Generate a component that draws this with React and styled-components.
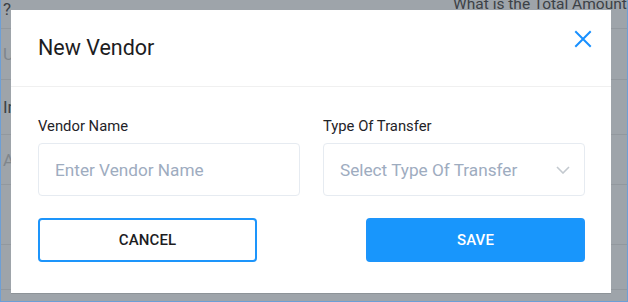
import React from "react";
import styled, { createGlobalStyle } from "styled-components";

const Global = createGlobalStyle`
  html, body { margin: 0; padding: 0; }
  body { font-family: Roboto, "Liberation Sans", sans-serif; background: #9ea4aa; }
  * { box-sizing: border-box; }
`;

const Frame = styled.div`
  position: relative;
  width: 628px;
  height: 302px;
  overflow: hidden;
  background: #9ea4aa;
  border-left: 1px solid #6d9fd6;
  border-right: 1px solid #6d9fd6;
  border-bottom: 1px solid #6d9fd6;
`;

const BackPage = styled.div`
  display: flex;
  flex-direction: column;
  height: 100%;
`;

const BackRow = styled.div`
  display: flex;
  align-items: center;
  height: ${(p) => p.$h}px;
  border-bottom: 1px solid #92989e;
  padding: 0 0 0 2px;
  font-size: 17px;
  color: ${(p) => (p.$faint ? "#80868c" : "#3c4146")};
  overflow: hidden;
`;

const BackText = styled.span`
  white-space: nowrap;
  flex-shrink: 0;
  margin-top: ${(p) => p.$mt || 0}px;
  margin-left: ${(p) => p.$ml || 0}px;
  font-size: ${(p) => p.$fs || 17}px;
`;

const Modal = styled.div`
  position: absolute;
  left: 10px;
  top: 10px;
  width: 600px;
  height: 283px;
  background: #fff;
  display: flex;
  flex-direction: column;
  box-shadow: 0 1px 0 #8d9398;
`;

const Header = styled.div`
  height: 77px;
  display: flex;
  align-items: center;
  justify-content: space-between;
  padding: 0 19px 0 27px;
  border-bottom: 1px solid #f0f0f0;
`;

const Title = styled.h2`
  margin: 0;
  font-size: 21.5px;
  font-weight: 400;
  color: #1d1d1f;
  margin-top: -2px;
`;

const Close = styled.button`
  border: none;
  background: none;
  padding: 0;
  width: 18px;
  height: 18px;
  margin-top: -19px;
  cursor: pointer;
  display: flex;
`;

const Body = styled.div`
  padding: 30px 26px 0 27px;
  display: flex;
  flex-direction: column;
  gap: 22px;
`;

const Fields = styled.div`
  display: grid;
  grid-template-columns: 262px 262px;
  column-gap: 23px;
`;

const Field = styled.div`
  display: flex;
  flex-direction: column;
  gap: 8px;
`;

const Label = styled.label`
  font-size: 14.8px;
  color: #1f2328;
  line-height: 18px;
`;

const Box = styled.div`
  height: 53px;
  border: 1px solid #e6ebf1;
  border-radius: 4px;
  display: flex;
  align-items: center;
  justify-content: space-between;
  padding: 0 14px 0 16px;
  font-size: 17.2px;
  color: #9eacbf;
`;

const Input = styled.input`
  border: none;
  outline: none;
  padding: 0;
  width: 100%;
  font: inherit;
  color: #1f2328;
  background: transparent;
  &::placeholder { color: #9eacbf; }
`;

const Buttons = styled.div`
  display: flex;
  justify-content: space-between;
`;

const Button = styled.button`
  width: 219px;
  height: 44px;
  border-radius: 4px;
  font-family: Roboto, "Liberation Sans", sans-serif;
  font-size: 15px;
  font-weight: 500;
  letter-spacing: 0.1px;
  cursor: pointer;
  border: 2px solid #1d95fb;
  background: ${(p) => (p.$primary ? "#1896fc" : "#fff")};
  color: ${(p) => (p.$primary ? "#fff" : "#1d1d1f")};
`;

export default function App() {
  return (
    <>
      <Global />
      <Frame>
        <BackPage>
          <BackRow $h={29}>
            <BackText $mt={-10}>?</BackText>
            <BackText $mt={-20} $ml={442} $fs={15.5}>What is the Total Amount of</BackText>
          </BackRow>
          <BackRow $h={51} $faint>
            <BackText>U</BackText>
          </BackRow>
          <BackRow $h={55}>
            <BackText>In</BackText>
          </BackRow>
          <BackRow $h={50} $faint>
            <BackText>Ar</BackText>
          </BackRow>
          <BackRow $h={60} />
          <BackRow $h={45} />
        </BackPage>
        <Modal role="dialog">
          <Header>
            <Title>New Vendor</Title>
            <Close aria-label="Close">
              <svg width="18" height="18" viewBox="0 0 18 18">
                <path d="M2 2 L16 16 M16 2 L2 16" stroke="#1890ff" strokeWidth="2" strokeLinecap="square" fill="none" />
              </svg>
            </Close>
          </Header>
          <Body>
            <Fields>
              <Field>
                <Label>Vendor Name</Label>
                <Box>
                  <Input placeholder="Enter Vendor Name" />
                </Box>
              </Field>
              <Field>
                <Label>Type Of Transfer</Label>
                <Box>
                  <span>Select Type Of Transfer</span>
                  <svg width="14" height="8" viewBox="0 0 14 8">
                    <path d="M1 1 L7 7 L13 1" stroke="#c3c9cf" strokeWidth="1.6" fill="none" />
                  </svg>
                </Box>
              </Field>
            </Fields>
            <Buttons>
              <Button>CANCEL</Button>
              <Button $primary>SAVE</Button>
            </Buttons>
          </Body>
        </Modal>
      </Frame>
    </>
  );
}
